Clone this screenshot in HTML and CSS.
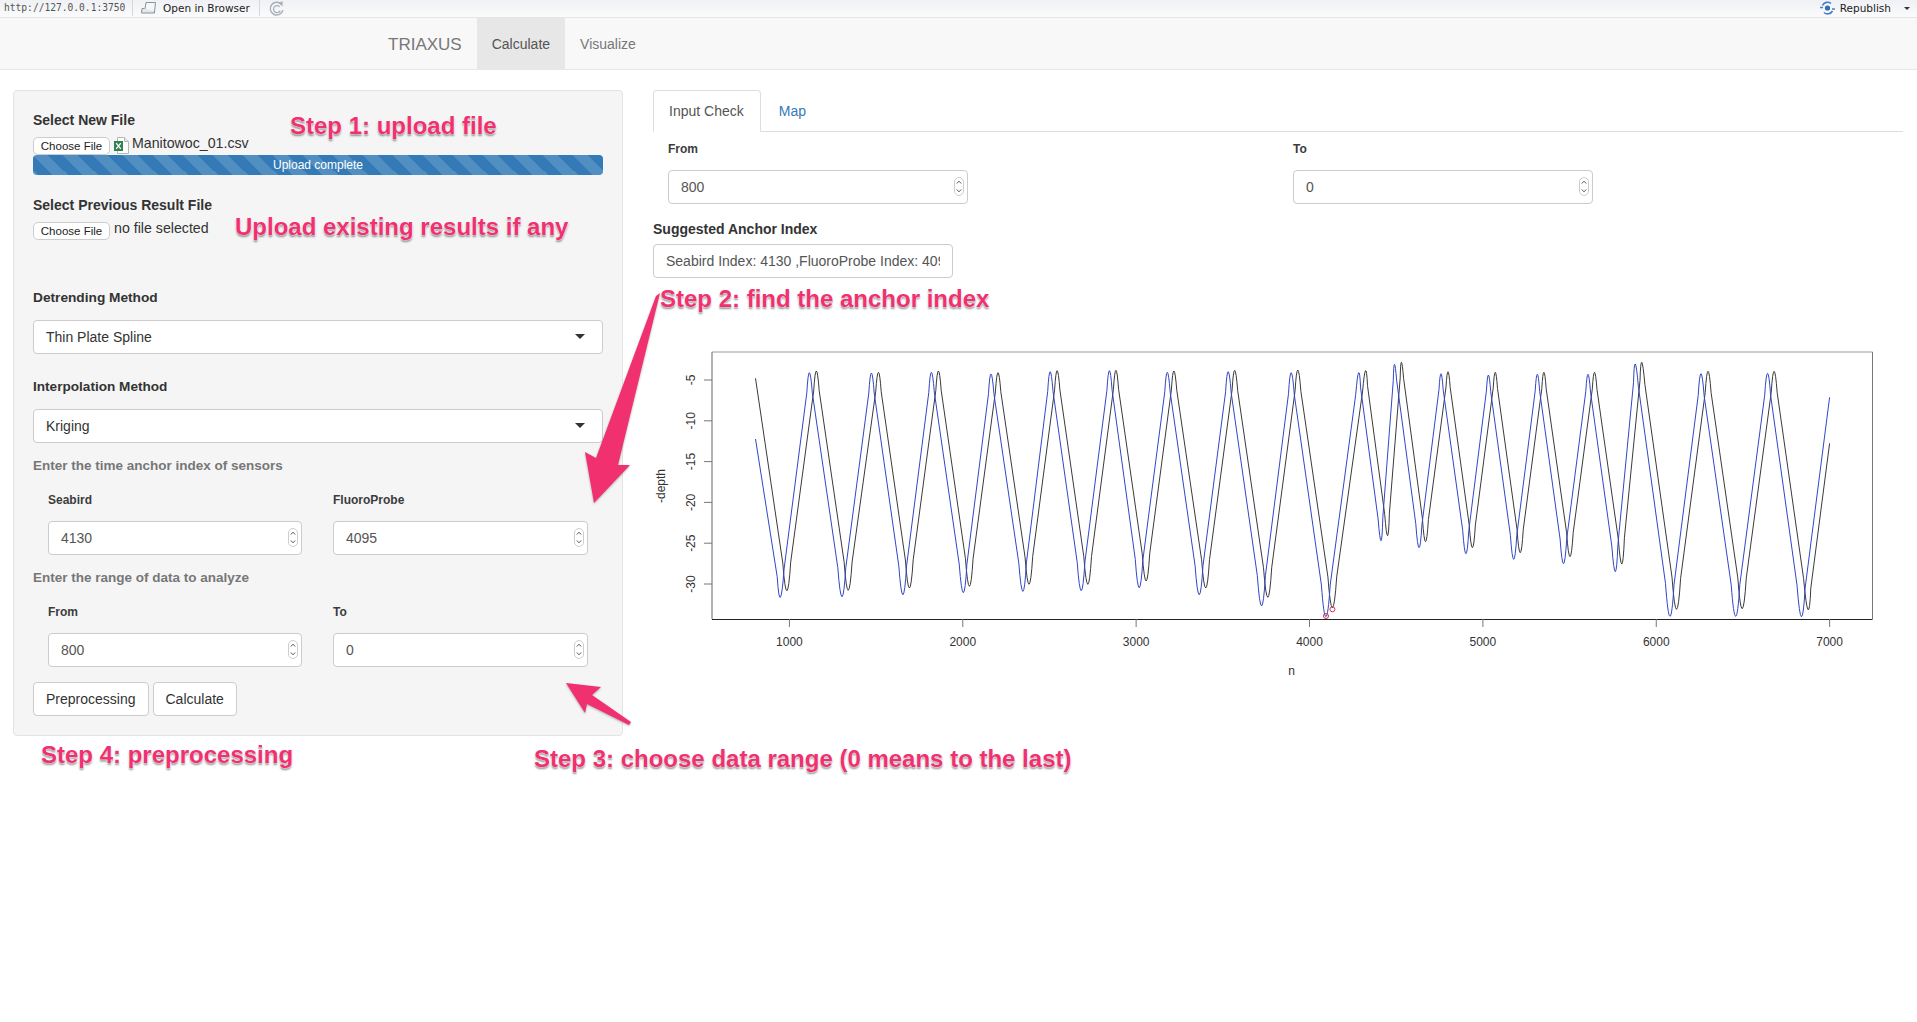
FILE: index.html
```html
<!DOCTYPE html>
<html lang="en">

<head>
    <meta charset="UTF-8">
    <title>TRIAXUS</title>
    <link rel="stylesheet" href="styles.css">
</head>

<body>
    <div class="ide-bar">
        <span class="ide-url">http://127.0.0.1:3750</span>
        <span class="ide-sep"></span>
        <svg class="ide-icon" width="18" height="14" viewBox="0 0 18 14">
            <path d="M5 1.5h9.5l-1 9.5H3.5z" fill="#f4f6f8" stroke="#8b9299" />
            <path d="M3.5 7.5H1l-.5 4.5h13l-.2-2" fill="#e4e8ec" stroke="#8b9299" />
        </svg>
        <span class="ide-text">Open in Browser</span>
        <span class="ide-sep ide-sep-b"></span>
        <svg class="ide-icon" width="17" height="17" viewBox="0 0 16 16">
            <path d="M12.5 4A6 6 0 1 0 14 9.5" fill="none" stroke="#a9b1ba" stroke-width="1.4" />
            <path d="M11 6.5A3.3 3.3 0 1 0 11.5 10" fill="none" stroke="#a9b1ba" stroke-width="1.2" />
            <path d="M9.5 2l4.5-.5-.5 4.5z" fill="#a9b1ba" />
        </svg>
        <div class="ide-right">
            <svg width="17" height="14" viewBox="0 0 17 14">
                <path d="M1 6.5h3M3.5 4.5A5.5 5.5 0 0 1 12 2.5" fill="none" stroke="#4a7fc1" stroke-width="1.6" />
                <path d="M13 8h3M13.5 10A5.5 5.5 0 0 1 5 11.5" fill="none" stroke="#4a7fc1" stroke-width="1.6" />
                <circle cx="8.5" cy="7" r="2.6" fill="#2f6db5" />
            </svg>
            <span class="ide-text">Republish</span>
            <span class="ide-caret"></span>
        </div>
    </div>

    <nav class="navbar">
        <span class="brand">TRIAXUS</span>
        <a class="nav-link active">Calculate</a>
        <a class="nav-link">Visualize</a>
    </nav>

    <div class="main">
        <div class="panel">
            <div class="field-label">Select New File</div>
            <div class="file-row">
                <span class="file-btn">Choose File</span>
                <svg class="file-icon" width="15" height="17" viewBox="0 0 15 17">
                    <path d="M3.5.5h7l4 4v12h-11z" fill="#fff" stroke="#b4b9b2" />
                    <path d="M10.5.5v4h4" fill="#e8ebe8" stroke="#b4b9b2" />
                    <rect x="0" y="4" width="9" height="10" fill="#2f8350" />
                    <path d="M2.2 6.2l4.6 5.6M6.8 6.2l-4.6 5.6" stroke="#fff" stroke-width="1.3" />
                </svg>
                <span class="file-name">Manitowoc_01.csv</span>
            </div>
            <div class="progress">Upload complete</div>

            <div class="field-label second">Select Previous Result File</div>
            <div class="file-row">
                <span class="file-btn">Choose File</span>
                <span class="file-name none">no file selected</span>
            </div>

            <div class="field-label detrend">Detrending Method</div>
            <div class="select">Thin Plate Spline<span class="caret"></span></div>

            <div class="field-label interp">Interpolation Method</div>
            <div class="select">Kriging<span class="caret"></span></div>

            <div class="hint">Enter the time anchor index of sensors</div>
            <div class="two-cols">
                <div>
                    <div class="small-label">Seabird</div>
                    <div class="num">4130<svg class="spin" width="10" height="19" viewBox="0 0 10 19"><use href="#spinner" /></svg></div>
                </div>
                <div>
                    <div class="small-label">FluoroProbe</div>
                    <div class="num">4095<svg class="spin" width="10" height="19" viewBox="0 0 10 19"><use href="#spinner" /></svg></div>
                </div>
            </div>

            <div class="hint">Enter the range of data to analyze</div>
            <div class="two-cols">
                <div>
                    <div class="small-label">From</div>
                    <div class="num">800<svg class="spin" width="10" height="19" viewBox="0 0 10 19"><use href="#spinner" /></svg></div>
                </div>
                <div>
                    <div class="small-label">To</div>
                    <div class="num">0<svg class="spin" width="10" height="19" viewBox="0 0 10 19"><use href="#spinner" /></svg></div>
                </div>
            </div>

            <div class="buttons">
                <span class="btn">Preprocessing</span>
                <span class="btn">Calculate</span>
            </div>
        </div>

        <div class="content">
            <div class="tabs">
                <span class="tab active">Input Check</span>
                <span class="tab link">Map</span>
            </div>

            <div class="range-cols">
                <div>
                    <div class="small-label">From</div>
                    <div class="num wide">800<svg class="spin" width="10" height="19" viewBox="0 0 10 19"><use href="#spinner" /></svg></div>
                </div>
                <div>
                    <div class="small-label">To</div>
                    <div class="num wide">0<svg class="spin" width="10" height="19" viewBox="0 0 10 19"><use href="#spinner" /></svg></div>
                </div>
            </div>

            <div class="field-label anchor">Suggested Anchor Index</div>
            <div class="output"><span>Seabird Index: 4130 ,FluoroProbe Index: 4095</span></div>

            <!-- viewBox uses page coordinates, easier to read off the plot -->
            <svg class="plot" width="1250" height="340" viewBox="653 340 1250 340">
                <g class="axis-box">
                    <line x1="712" y1="352" x2="1872.5" y2="352" stroke="#999" stroke-width="1.2" />
                    <line x1="1872.5" y1="352" x2="1872.5" y2="619" stroke="#777" />
                    <line x1="712" y1="352" x2="712" y2="619" stroke="#666" />
                    <line x1="712" y1="619.5" x2="1872.5" y2="619.5" stroke="#222" />
                </g>
                <g id="ticks"></g>
                <path id="lineBlack" fill="none" stroke="#3a3a3a" stroke-width="1" />
                <path id="lineBlue" fill="none" stroke="#3146c6" stroke-width="1" />
                <circle cx="1326" cy="616" r="2.5" fill="none" stroke="#d8314a" />
                <circle cx="1332.4" cy="609.3" r="2.5" fill="none" stroke="#d8314a" />
                <text class="plot-text" x="1291.6" y="675" text-anchor="middle">n</text>
                <text class="plot-text" x="665" y="486" text-anchor="middle" transform="rotate(-90 665 486)">-depth</text>
            </svg>
        </div>
    </div>

    <div class="note step1">Step 1: upload file</div>
    <div class="note existing">Upload existing results if any</div>
    <div class="note step2">Step 2: find the anchor index</div>
    <div class="note step3">Step 3: choose data range (0 means to the last)</div>
    <div class="note step4">Step 4: preprocessing</div>

    <svg class="arrows" width="1917" height="1022" viewBox="0 0 1917 1022">
        <polygon points="660,293 618,465 630,465 594,503 585,452 596,458 656,296" />
        <polygon points="566,683 601,687 592,695 631,722 629,725 587,704 585,713" />
    </svg>

    <svg width="0" height="0" class="defs">
        <symbol id="spinner" viewBox="0 0 10 19">
            <rect x=".5" y=".5" width="9" height="18" rx="4.5" fill="#fff" stroke="#ccc" />
            <path d="M2.8 6.5L5 4.2l2.2 2.3M2.8 12.5L5 14.8l2.2-2.3" fill="none" stroke="#555" stroke-width="1" />
        </symbol>
    </svg>

    <script>
        // extrema of the two depth traces, page coordinates
        var black = [755.5,378.3, 786.9,590.7, 816.3,371, 848.2,590.3, 878.4,372.3, 909.4,588, 938.4,371, 969.4,586.3,
            998,372.7, 1029,584.3, 1057.1,370.7, 1087.8,584.3, 1115.9,370.3, 1146.1,581, 1173.9,371, 1205.7,588,
            1234.7,370.3, 1267.8,597.3, 1297.8,370, 1332.4,607.7, 1365.5,370.7, 1387.6,535.7, 1401.4,362.3, 1425.5,541.7,
            1448,371.7, 1472.4,547.7, 1495.3,372.3, 1520.2,552.7, 1543.9,372.3, 1570,556.7, 1594.5,372.3, 1621.8,564,
            1641.8,362.3, 1676.5,609.3, 1708,371.3, 1742.2,608.7, 1774.1,371.3, 1808,609.7, 1829.6,443.3];
        var blue = [755.5,439, 780.4,597.3, 809.4,372.7, 842,596.7, 871.4,373, 902.9,594.7, 931.4,372.3, 963.3,592.7,
            991,374, 1022.9,591.3, 1050.2,371.7, 1081.2,590.7, 1109.4,370.7, 1139.2,587.7, 1167.3,372.3, 1199.2,594.7,
            1228.2,371.7, 1261.6,606, 1291.2,372.7, 1325.9,616.7, 1358.6,372.7, 1381,540.7, 1394.5,364.3, 1419,547.7,
            1441,373.7, 1465.9,553.7, 1488.4,375, 1513.7,559.3, 1537.3,374.3, 1563.5,563.7, 1588,374.3, 1615.3,571.7,
            1635.3,364, 1670,616.3, 1701,373.7, 1735.7,616.3, 1767.6,373.3, 1801.4,616.7, 1829.6,397.3];

        function tracePath(p) {
            var d = "M" + p[0] + " " + p[1];
            for (var i = 2; i < p.length - 2; i += 2) {
                // troughs are rounder than peaks
                var t = p[i + 1] > p[i - 1] ? 0.13 : 0.09;
                var ax = p[i] + (p[i - 2] - p[i]) * t, ay = p[i + 1] + (p[i - 1] - p[i + 1]) * t;
                var bx = p[i] + (p[i + 2] - p[i]) * t, by = p[i + 1] + (p[i + 3] - p[i + 1]) * t;
                var cx = 2 * p[i] - (ax + bx) / 2, cy = 2 * p[i + 1] - (ay + by) / 2;
                d += "L" + ax.toFixed(1) + " " + ay.toFixed(1) + "Q" + cx.toFixed(1) + " " + cy.toFixed(1) + " " + bx.toFixed(1) + " " + by.toFixed(1);
            }
            return d + "L" + p[p.length - 2] + " " + p[p.length - 1];
        }
        document.getElementById("lineBlack").setAttribute("d", tracePath(black));
        document.getElementById("lineBlue").setAttribute("d", tracePath(blue));

        // axis ticks
        var html = "";
        for (var n = 1000; n <= 7000; n += 1000) {
            var x = 789.4 + (n - 1000) * 0.17337;
            html += '<line x1="' + x + '" y1="619" x2="' + x + '" y2="627" stroke="#777"/>';
            html += '<text class="plot-text" x="' + x + '" y="646" text-anchor="middle">' + n + '</text>';
        }
        for (var v = 5; v <= 30; v += 5) {
            var y = 380 + (v - 5) * 8.16;
            html += '<line x1="704" y1="' + y + '" x2="712" y2="' + y + '" stroke="#777"/>';
            html += '<text class="plot-text" x="695" y="' + y + '" text-anchor="middle" transform="rotate(-90 695 ' + y + ')">-' + v + '</text>';
        }
        document.getElementById("ticks").innerHTML = html;
    </script>
</body>

</html>
```

FILE: styles.css
```css
body {
    margin: 0;
    position: relative;
    height: 1022px;
    overflow: hidden;
    background-color: #fff;
    color: #333;
    font-family: "Liberation Sans", Arial, sans-serif;
    font-size: 14px;
    line-height: 20px;
}

/* rstudio viewer strip */
.ide-bar {
    display: flex;
    align-items: center;
    height: 18px;
    box-sizing: border-box;
    padding-left: 4px;
    padding-bottom: 1px;
    background: linear-gradient(#eff1f4, #fbfbfc);
    border-bottom: 1px solid #e6e6e6;
    font-family: "DejaVu Sans", sans-serif;
    font-size: 10.5px;
    color: #222;
}

.ide-url {
    font-family: "DejaVu Sans Mono", monospace;
    font-size: 9.6px;
    color: #555;
    width: 128px;
}

.ide-sep {
    width: 1px;
    height: 16px;
    background-color: #d8d8d8;
    margin-right: 8px;
}

.ide-sep-b {
    margin-left: 9px;
}

.ide-icon {
    margin-right: 4px;
    flex: none;
}

.ide-right {
    margin-left: auto;
    display: flex;
    align-items: center;
    gap: 4px;
    padding-right: 7px;
}

.ide-caret {
    margin-left: 9px;
    border-top: 3px solid #333;
    border-left: 3px solid transparent;
    border-right: 3px solid transparent;
}

.navbar {
    display: flex;
    height: 52px;
    box-sizing: border-box;
    padding-left: 374px;
    background-color: #f8f8f8;
    border-bottom: 1px solid #e7e7e7;
    color: #777;
}

.brand {
    padding: 0 15px 0 14px;
    font-size: 17px;
    line-height: 53px;
}

.nav-link {
    padding: 0 15px;
    line-height: 53px;
}

.nav-link.active {
    background-color: #e7e7e7;
    color: #555;
}

.main {
    display: flex;
    align-items: flex-start;
    gap: 30px;
    padding: 20px 14px 0 13px;
}

.panel {
    width: 610px;
    box-sizing: border-box;
    flex: none;
    padding: 19px;
    background-color: #f5f5f5;
    border: 1px solid #e3e3e3;
    border-radius: 4px;
}

.field-label {
    font-weight: bold;
    margin-bottom: 7px;
}

.second {
    margin-top: 20px;
}

.detrend {
    margin-top: 48px;
    margin-bottom: 12px;
    font-size: 13.7px;
}

.interp {
    margin-top: 23px;
    margin-bottom: 12px;
    font-size: 13.6px;
}

.file-row {
    display: flex;
    height: 18px;
}

.file-btn {
    width: 77px;
    height: 18px;
    box-sizing: border-box;
    background-color: #fff;
    border: 1px solid #ccc;
    border-radius: 5px;
    text-align: center;
    font-size: 11.5px;
    line-height: 17px;
    color: #222;
    flex: none;
}

.file-icon {
    margin-left: 4px;
    flex: none;
}

.file-name {
    margin-left: 3px;
    font-size: 14.2px;
    line-height: 13px;
    color: #333;
}

.file-name.none {
    margin-left: 4px;
}

.progress {
    height: 20px;
    border-radius: 4px;
    background-color: #337ab7;
    background-image: linear-gradient(45deg, rgba(255, 255, 255, 0.15) 25%, transparent 25%, transparent 50%, rgba(255, 255, 255, 0.15) 50%, rgba(255, 255, 255, 0.15) 75%, transparent 75%, transparent);
    background-size: 30px 30px;
    color: #fff;
    font-size: 12px;
    text-align: center;
}

.select {
    position: relative;
    height: 34px;
    box-sizing: border-box;
    padding-left: 12px;
    background-color: #fff;
    border: 1px solid #ccc;
    border-radius: 4px;
    line-height: 32px;
}

.caret {
    position: absolute;
    right: 17px;
    top: 13px;
    border-top: 5px solid #333;
    border-left: 5px solid transparent;
    border-right: 5px solid transparent;
}

.hint {
    margin-top: 13px;
    margin-bottom: 14px;
    font-weight: bold;
    color: #777;
    font-size: 13.5px;
}

.two-cols {
    display: grid;
    grid-template-columns: 254px 255px;
    gap: 31px;
    padding: 0 15px;
}

.small-label {
    font-size: 12px;
    font-weight: bold;
    color: #3c3c3c;
    margin-bottom: 11px;
}

.num {
    position: relative;
    height: 34px;
    box-sizing: border-box;
    padding-left: 12px;
    background-color: #fff;
    border: 1px solid #ccc;
    border-radius: 4px;
    color: #555;
    line-height: 32px;
}

.spin {
    position: absolute;
    right: 3px;
    top: 6px;
}

.buttons {
    display: flex;
    gap: 4px;
    margin-top: 15px;
}

.btn {
    height: 34px;
    box-sizing: border-box;
    padding: 0 12px;
    background-color: #fff;
    border: 1px solid #ccc;
    border-radius: 4px;
    line-height: 32px;
}

.content {
    flex: 1;
    min-width: 0;
}

.tabs {
    display: flex;
    gap: 2px;
    border-bottom: 1px solid #ddd;
    height: 41px;
}

.tab {
    padding: 10px 16px 10px 15px;
    height: 42px;
    box-sizing: border-box;
    border: 1px solid transparent;
    border-radius: 4px 4px 0 0;
    color: #555;
}

.tab.active {
    background-color: #fff;
    border-color: #ddd #ddd #fff;
}

.tab.link {
    color: #337ab7;
}

.range-cols {
    display: grid;
    grid-template-columns: 625px 625px;
    margin-top: 7px;
}

.range-cols > div {
    padding-left: 15px;
}

.num.wide {
    width: 300px;
}

.anchor {
    margin-top: 15px;
    margin-bottom: 5px;
}

.output {
    width: 300px;
    height: 34px;
    box-sizing: border-box;
    padding: 0 12px;
    background-color: #fff;
    border: 1px solid #ccc;
    border-radius: 4px;
    line-height: 32px;
    color: #555;
}

.output span {
    display: block;
    overflow: hidden;
    white-space: nowrap;
}

.plot {
    display: block;
    margin-top: 62px;
}

.plot-text {
    font-family: "Liberation Sans", Arial, sans-serif;
    font-size: 12px;
    fill: #333;
}

/* pink callouts drawn over the page */
.note {
    position: absolute;
    line-height: 30px;
    font-size: 24px;
    font-weight: bold;
    white-space: nowrap;
    color: #f0306f;
    text-shadow: 0 0 1px #fff, 0 0 2px #fff, 0 2px 2px rgba(0, 0, 0, 0.45);
}

.step1 {
    left: 290px;
    top: 111px;
}

.existing {
    left: 235px;
    top: 212px;
}

.step2 {
    left: 660px;
    top: 284px;
}

.step3 {
    left: 534px;
    top: 744px;
}

.step4 {
    left: 41px;
    top: 740px;
}

.arrows {
    position: absolute;
    left: 0;
    top: 0;
    pointer-events: none;
    fill: #f0306f;
    filter: drop-shadow(0 1px 1px rgba(0, 0, 0, 0.3));
}

.defs {
    position: absolute;
}
```
